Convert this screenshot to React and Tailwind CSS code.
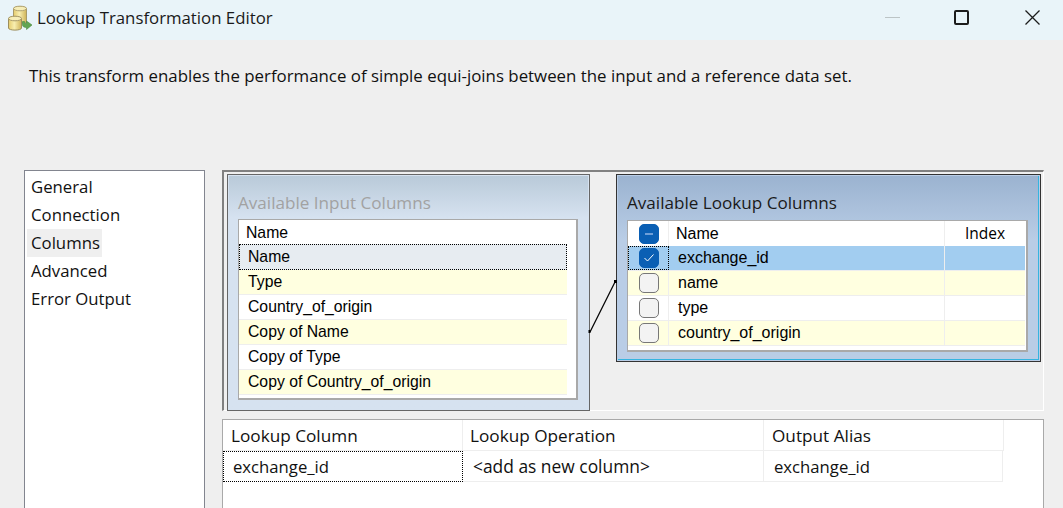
const sans = "font-['Open_Sans',sans-serif]";
const arial = "font-['Liberation_Sans',Arial,sans-serif]";

const inputRows = ['Type', 'Country_of_origin', 'Copy of Name', 'Copy of Type', 'Copy of Country_of_origin'];
const lookupRows = ['name', 'type', 'country_of_origin'];
const pages = ['General', 'Connection', 'Columns', 'Advanced', 'Error Output'];

function AppIcon() {
  return (
    <svg width="26" height="28" viewBox="7 3 26 28" className="ml-[7px] mr-[4px]">
      <defs>
        <linearGradient id="db" x1="0" x2="1" y1="0" y2="0">
          <stop offset="0" stopColor="#e4cb6c" />
          <stop offset="0.45" stopColor="#f8eeb0" />
          <stop offset="1" stopColor="#cfb358" />
        </linearGradient>
      </defs>
      <path d="M13.500 7.500C13.500 5 26.500 5 26.500 7.500V22H13.500Z" fill="url(#db)" stroke="#a89a68" />
      <ellipse cx="20" cy="7.500" rx="6.500" ry="2.300" fill="#f7eeb8" stroke="#b0a270" />
      <path d="M8.500 17.500C8.500 15 21.500 15 21.500 17.500V27C21.500 29.800 8.500 29.800 8.500 27Z" fill="url(#db)" stroke="#9c8e5c" />
      <ellipse cx="15" cy="17.500" rx="6.500" ry="2.300" fill="#f7eeb8" stroke="#a89a68" />
      <path d="M22.500 20.500V24C22.500 25.500 24 26.500 26.500 26.500V28.500L32 24L26.500 20V22.500C25 22.500 24.500 22 24.500 20.500Z" fill="#62a552" stroke="#4a8a40" strokeWidth="0.600" />
    </svg>
  );
}

function WindowButtons() {
  return (
    <div className="ml-auto flex items-center">
      <div className="h-px w-[15px] bg-[#bcc4c6] mr-[54px]" />
      <div className="h-[15px] w-[15px] rounded-[2px] border-2 border-[#1c1c1c] mr-[56px]" />
      <svg width="15" height="15" viewBox="0 0 15 15" className="mr-[23px]">
        <path d="M0.500 0.500L14.500 14.500M14.500 0.500L0.500 14.500" stroke="#1c1c1c" strokeWidth="1.300" />
      </svg>
    </div>
  );
}

function Checkbox({ state }) {
  const on = state !== 'off';
  return (
    <div className={`flex h-5 w-5 items-center justify-center rounded-[5px] border ${on ? 'border-[#0a5fb4] bg-[#0a5fb4]' : 'border-[#777777] bg-[#f3f3f3]'}`}>
      {state === 'mixed' && <div className="h-[2px] w-2 bg-[#6f9fd8]" />}
      {state === 'checked' && (
        <svg width="10" height="8" viewBox="0 0 10 8">
          <path d="M0.500 4L3.500 7L9.500 0.500" fill="none" stroke="#ffffff" strokeWidth="1" />
        </svg>
      )}
    </div>
  );
}

function InputPanel() {
  return (
    <div className="h-[237px] w-[363px] shrink-0 border border-[#666666] bg-[#d6e2f0] p-px">
      <div className="h-full bg-gradient-to-b from-[#b9cad9] to-[#d6e2f0] to-[18%] pl-[9px] pr-[10px]">
        <div className={`h-[43px] pt-[15px] text-[17.100px] leading-[24px] text-[#a2a2a2] ${sans}`}>Available Input Columns</div>
        <div className={`h-[181px] border-2 border-t border-l border-[#a9a9a9] bg-white text-[15.750px] text-black ${arial}`}>
          <div className="flex h-[24px] w-[328px] items-center pl-[7px] pt-[1px]">Name</div>
          <div className="flex h-[26px] w-[328px] items-center border border-dotted border-black bg-[#e7ecf1] pl-[8px]">Name</div>
          {inputRows.map((name, i) => (
            <div key={name} className={`flex h-[25px] w-[328px] items-center border-b border-[#eeeeee] pl-[9px] ${i % 2 === 0 ? 'bg-[#ffffe0]' : 'bg-white'}`}>{name}</div>
          ))}
        </div>
      </div>
    </div>
  );
}

function LookupRow({ name, state, tone, focused }) {
  return (
    <div className={`flex h-[25px] w-[397px] border-b border-[#eeeeee] ${tone}`}>
      <div className={`flex w-[41px] shrink-0 items-center justify-center border-r border-[#eeeeee] pl-[1px] ${focused ? 'border border-dotted border-black' : ''}`}>
        <Checkbox state={state} />
      </div>
      <div className="flex w-[276px] shrink-0 items-center border-r border-[#eeeeee] pl-[9px]">{name}</div>
    </div>
  );
}

function LookupPanel() {
  return (
    <div className="h-[188px] w-[425px] shrink-0 border border-[#333333] bg-[#b9cde6] p-px">
      <div className="h-full border-b border-r border-[#35b4e0] bg-gradient-to-b from-[#9bb3d0] to-[#b9cde6] to-[35%] pl-[9px] pr-[10px]">
        <div className={`h-[44px] pt-[15px] text-[17.100px] leading-[24px] text-[#1a1a1a] ${sans}`}>Available Lookup Columns</div>
        <div className={`h-[132px] border-2 border-t border-l border-[#a9a9a9] bg-white text-[16px] text-black ${arial}`}>
          <div className="flex h-[25px] items-center">
            <div className="flex h-full w-[41px] shrink-0 items-center justify-center border-r border-[#eeeeee] pl-[1px]">
              <Checkbox state="mixed" />
            </div>
            <div className="flex h-full w-[276px] shrink-0 items-center border-r border-[#eeeeee] pl-[7px]">Name</div>
            <div className={`flex h-full flex-1 items-center justify-center pr-[1px] text-[15.500px] ${sans}`}>Index</div>
          </div>
          <LookupRow name="exchange_id" state="checked" tone="bg-[#a2cdf0]" focused />
          {lookupRows.map((name, i) => (
            <LookupRow key={name} name={name} state="off" tone={i % 2 === 0 ? 'bg-[#ffffe0]' : 'bg-white'} />
          ))}
        </div>
      </div>
    </div>
  );
}

function Connector() {
  return (
    <svg width="30" height="56" viewBox="0 0 30 56" className="absolute left-[364px] top-[106px]">
      <path d="M2 54L27 4" stroke="#000000" strokeWidth="1.200" />
      <rect x="0.500" y="52" width="2" height="3" fill="#000000" />
      <rect x="26" y="2" width="3" height="3" fill="#000000" />
    </svg>
  );
}

function MappingGrid() {
  const cell = 'flex items-center border-r border-b border-[#eeeeee]';
  return (
    <div className={`mt-[8px] h-[89px] border-x border-t border-[#a9a9a9] bg-white text-[#111111] ${sans}`}>
      <div className="flex h-[31px] text-[17.200px]">
        <div className={`${cell} w-[240px] pl-[8px] pt-[1px]`}>Lookup Column</div>
        <div className={`${cell} w-[301px] pl-[7px] pt-[1px]`}>Lookup Operation</div>
        <div className={`${cell} w-[240px] pl-[8px] pt-[1px]`}>Output Alias</div>
      </div>
      <div className="flex h-[31px] text-[16.700px]">
        <div className="flex w-[240px] items-center border border-dotted border-black pl-[9px] pt-[1px]">exchange_id</div>
        <div className={`${cell} w-[301px] pl-[10px] pt-[1px] text-[17.400px]`}>&lt;add as new column&gt;</div>
        <div className={`${cell} w-[239px] pl-[10px] pt-[1px]`}>exchange_id</div>
      </div>
    </div>
  );
}

export default function App() {
  return (
    <div className="flex h-[508px] w-[1063px] flex-col overflow-hidden bg-[#efefef]">
      <div className={`flex h-[40px] shrink-0 items-center bg-[#e9f4f9] pb-[5px] text-[16.800px] text-[#1a1a1a] ${sans}`}>
        <AppIcon />
        <span>Lookup Transformation Editor</span>
        <WindowButtons />
      </div>

      <p className={`ml-[29px] mt-[24px] h-[106px] shrink-0 text-[16.850px] leading-[24px] text-[#111111] ${sans}`}>
        This transform enables the performance of simple equi-joins between the input and a reference data set.
      </p>

      <div className="flex min-h-0 flex-1 pl-[24px]">
        <div className={`h-full w-[181px] shrink-0 border border-b-0 border-[#82858f] bg-white pl-[2px] pt-[2px] text-[16.750px] text-[#111111] ${sans}`}>
          {pages.map((page) => (
            <div key={page} className={`flex h-[28px] w-fit items-center pl-[4px] pr-[2px] ${page === 'Columns' ? 'bg-[#efefef]' : ''}`}>{page}</div>
          ))}
        </div>

        <div className="ml-[17px] w-[822px] shrink-0">
          <div className="relative h-[241px] border-t-2 border-l-2 border-[#808080] border-r border-b border-r-white border-b-white pl-[3px] pt-[2px]">
            <div className="flex gap-[26px]">
              <InputPanel />
              <LookupPanel />
            </div>
            <Connector />
          </div>
          <MappingGrid />
        </div>
      </div>
    </div>
  );
}
